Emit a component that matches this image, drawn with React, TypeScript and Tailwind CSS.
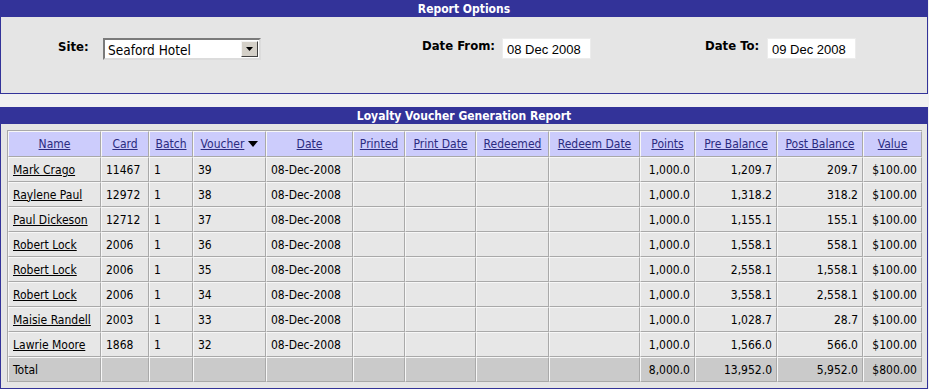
import React from "react";

const rows = [
  ["Mark Crago", "11467", "1", "39", "08-Dec-2008", "1,000.0", "1,209.7", "209.7", "$100.00"],
  ["Raylene Paul", "12972", "1", "38", "08-Dec-2008", "1,000.0", "1,318.2", "318.2", "$100.00"],
  ["Paul Dickeson", "12712", "1", "37", "08-Dec-2008", "1,000.0", "1,155.1", "155.1", "$100.00"],
  ["Robert Lock", "2006", "1", "36", "08-Dec-2008", "1,000.0", "1,558.1", "558.1", "$100.00"],
  ["Robert Lock", "2006", "1", "35", "08-Dec-2008", "1,000.0", "2,558.1", "1,558.1", "$100.00"],
  ["Robert Lock", "2006", "1", "34", "08-Dec-2008", "1,000.0", "3,558.1", "2,558.1", "$100.00"],
  ["Maisie Randell", "2003", "1", "33", "08-Dec-2008", "1,000.0", "1,028.7", "28.7", "$100.00"],
  ["Lawrie Moore", "1868", "1", "32", "08-Dec-2008", "1,000.0", "1,566.0", "566.0", "$100.00"],
];

const headers = [
  "Name",
  "Card",
  "Batch",
  "Voucher",
  "Date",
  "Printed",
  "Print Date",
  "Redeemed",
  "Redeem Date",
  "Points",
  "Pre Balance",
  "Post Balance",
  "Value",
];

const cell =
  "border-t border-l border-t-[#f7f7f7] border-l-[#f7f7f7] border-r border-b border-r-[#a9a9a9] border-b-[#a9a9a9] h-[25px] px-[4px] whitespace-nowrap overflow-hidden";

export default function App() {
  return (
    <div className="w-[929px] h-[389px] bg-[#f1f1f1] font-['DejaVu_Sans_Condensed','DejaVu_Sans',sans-serif] text-[12px] text-black">
      {/* Report Options */}
      <div className="w-[928px] border border-[#333399]">
        <div className="h-[16px] bg-[#333399] text-white font-bold text-[12px] leading-[16px] text-center">
          Report Options
        </div>
        <div className="h-[76px] bg-[#e5e5e5] flex items-start pt-[21px] pl-[57px]">
          <div className="w-[364px] flex items-start">
            <span className="font-bold text-[13px] leading-[15px] pt-[1px] w-[45px]">Site:</span>
            <div className="relative w-[158px] h-[22px] bg-white border-2 border-t-[#7a7a7a] border-l-[#7a7a7a] border-r-[#dcdcdc] border-b-[#dcdcdc] flex items-center">
              <span className="pl-[3px] text-[13.5px] leading-[16px] pt-[1px]">
                Seaford Hotel
              </span>
              <div className="absolute right-[1px] top-[1px] w-[17px] h-[16px] bg-[#d4d0c8] border border-t-[#f4f4f4] border-l-[#f4f4f4] border-r-[#404040] border-b-[#404040] flex items-center justify-center">
                <svg width="7" height="4" viewBox="0 0 7 4">
                  <polygon points="0,0 7,0 3.5,4" fill="#000" />
                </svg>
              </div>
            </div>
          </div>
          <div className="w-[283px] flex items-start">
            <span className="font-bold text-[13px] leading-[15px] w-[80px]">Date From:</span>
            <div className="w-[89px] h-[21px] bg-white border border-[#ececec] flex items-center pl-[4px] pt-[2px] font-['Liberation_Sans',sans-serif] text-[13px]">
              08 Dec 2008
            </div>
          </div>
          <div className="flex items-start">
            <span className="font-bold text-[13px] leading-[15px] w-[62px]">Date To:</span>
            <div className="w-[89px] h-[21px] bg-white border border-[#ececec] flex items-center pl-[4px] pt-[2px] font-['Liberation_Sans',sans-serif] text-[13px]">
              09 Dec 2008
            </div>
          </div>
        </div>
      </div>

      {/* Loyalty Voucher Generation Report */}
      <div className="w-[928px] mt-[13px] border border-[#333399]">
        <div className="h-[16px] bg-[#333399] text-white font-bold text-[12px] leading-[16px] text-center">
          Loyalty Voucher Generation Report
        </div>
        <div className="bg-[#e5e5e5] px-[6px] py-[6px] pr-[5px]">
          <table className="w-[914px] table-fixed border-separate border-spacing-0 border-l border-t border-[#a9a9a9]">
            <colgroup>
              <col className="w-[93px]" />
              <col className="w-[48px]" />
              <col className="w-[44px]" />
              <col className="w-[73px]" />
              <col className="w-[87px]" />
              <col className="w-[52px]" />
              <col className="w-[71px]" />
              <col className="w-[73px]" />
              <col className="w-[91px]" />
              <col className="w-[55px]" />
              <col className="w-[82px]" />
              <col className="w-[86px]" />
              <col className="w-[59px]" />
            </colgroup>
            <thead>
              <tr>
                {headers.map((h) => (
                  <th
                    key={h}
                    className={`${cell} h-[26px] bg-[#ccccfc] font-normal text-center text-[#2b2b80]`}
                  >
                    <span className="underline inline-flex items-center">
                      {h}
                      {h === "Voucher" && (
                        <svg width="10" height="6" viewBox="0 0 10 6" className="ml-[4px]">
                          <polygon points="0,0 10,0 5,6" fill="#000" />
                        </svg>
                      )}
                    </span>
                  </th>
                ))}
              </tr>
            </thead>
            <tbody>
              {rows.map((r, i) => (
                <tr key={i} className="bg-[#e7e7e7]">
                  <td className={`${cell} text-left`}>
                    <span className="underline">{r[0]}</span>
                  </td>
                  <td className={`${cell} text-left`}>{r[1]}</td>
                  <td className={`${cell} text-left`}>{r[2]}</td>
                  <td className={`${cell} text-left`}>{r[3]}</td>
                  <td className={`${cell} text-left`}>{r[4]}</td>
                  <td className={cell}></td>
                  <td className={cell}></td>
                  <td className={cell}></td>
                  <td className={cell}></td>
                  <td className={`${cell} text-right`}>{r[5]}</td>
                  <td className={`${cell} text-right`}>{r[6]}</td>
                  <td className={`${cell} text-right`}>{r[7]}</td>
                  <td className={`${cell} text-right`}>{r[8]}</td>
                </tr>
              ))}
              <tr className="bg-[#cacaca]">
                <td className={`${cell} text-left`}>Total</td>
                <td className={cell}></td>
                <td className={cell}></td>
                <td className={cell}></td>
                <td className={cell}></td>
                <td className={cell}></td>
                <td className={cell}></td>
                <td className={cell}></td>
                <td className={cell}></td>
                <td className={`${cell} text-right`}>8,000.0</td>
                <td className={`${cell} text-right`}>13,952.0</td>
                <td className={`${cell} text-right`}>5,952.0</td>
                <td className={`${cell} text-right`}>$800.00</td>
              </tr>
            </tbody>
          </table>
        </div>
      </div>
    </div>
  );
}
